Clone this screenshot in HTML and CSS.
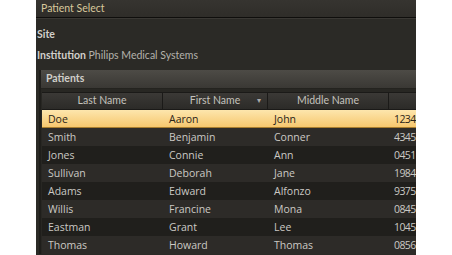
FILE: index.html
```html
<!DOCTYPE html>
<html>
<head>
<meta charset="utf-8">
<link rel="stylesheet" href="styles.css">
</head>
<body>
<div class="panel">
  <div class="titlebar">Patient Select</div>
  <div class="content">
    <div class="field field-site"><b>Site</b></div>
    <div class="field field-inst"><b>Institution</b> Philips Medical Systems</div>
    <div class="group">
      <div class="group-head">Patients</div>
      <div class="table">
        <div class="row head">
          <div class="cell">Last Name</div>
          <div class="cell sorted">First Name <span class="arrow">▾</span></div>
          <div class="cell">Middle Name</div>
          <div class="cell"></div>
        </div>
        <div class="row sel"><div class="cell">Doe</div><div class="cell">Aaron</div><div class="cell">John</div><div class="cell num">1234</div></div>
        <div class="row odd"><div class="cell">Smith</div><div class="cell">Benjamin</div><div class="cell">Conner</div><div class="cell num">4345</div></div>
        <div class="row even"><div class="cell">Jones</div><div class="cell">Connie</div><div class="cell">Ann</div><div class="cell num">0451</div></div>
        <div class="row odd"><div class="cell">Sullivan</div><div class="cell">Deborah</div><div class="cell">Jane</div><div class="cell num">1984</div></div>
        <div class="row even"><div class="cell">Adams</div><div class="cell">Edward</div><div class="cell">Alfonzo</div><div class="cell num">9375</div></div>
        <div class="row odd"><div class="cell">Willis</div><div class="cell">Francine</div><div class="cell">Mona</div><div class="cell num">0845</div></div>
        <div class="row even"><div class="cell">Eastman</div><div class="cell">Grant</div><div class="cell">Lee</div><div class="cell num">1045</div></div>
        <div class="row odd"><div class="cell">Thomas</div><div class="cell">Howard</div><div class="cell">Thomas</div><div class="cell num">0856</div></div>
      </div>
    </div>
  </div>
</div>
</body>
</html>
```
FILE: styles.css
```css
html, body { margin: 0; padding: 0; background: #ffffff; }
body { font-family: Lato, "Open Sans", "Liberation Sans", sans-serif; }
.panel {
  margin-left: 36px;
  width: 380px;
  height: 255px;
  overflow: hidden;
  background: #2b2a26;
}
.titlebar {
  height: 17px;
  line-height: 16px;
  padding-left: 5px;
  font-size: 10.5px;
  color: #d8c89c;
  background: linear-gradient(#363430, #2f2d29);
  border-bottom: 1px solid #0f0e0c;
  box-shadow: 0 1px 0 #3a3834;
}
.content { padding: 0 0 0 1px; }
.field { font-size: 10.5px; color: #b4b2ac; height: 21px; line-height: 21px; }
.field b { color: #d2d0cb; font-weight: 700; }
.field-site { margin-top: 6px; }
.group { margin: 4px 0 0 2px; background: #282723; border-left: 2px solid #1f1e1b; }
.group-head {
  height: 18px;
  line-height: 17px;
  padding-left: 5px;
  font-size: 10.5px;
  font-weight: 700;
  color: #d0cec9;
  background: linear-gradient(#4d4b46, #3a3834);
  border-bottom: 1px solid #24231f;
}
.table { margin-top: 3px; margin-left: 1px; }
.row {
  display: grid;
  grid-template-columns: 121px 105px 121px 40px;
  height: 18px;
  line-height: 18px;
  font-family: "Open Sans", Lato, sans-serif;
  font-size: 10.5px;
}
.row .cell { padding-left: 6px; white-space: nowrap; overflow: hidden; }
.row .num { letter-spacing: -0.6px; padding-left: 5px; }
.row.head {
  height: 16px;
  line-height: 15px;
  font-family: Lato, sans-serif;
  font-size: 10.5px;
  color: #c4c2bd;
  background: linear-gradient(#3b3936, #2c2b28);
  border-top: 1px solid #1b1a18;
  border-bottom: 1px solid #1b1a18;
}
.row.head .cell { padding-left: 0; text-align: center; border-right: 1px solid #1b1a18; position: relative; }
.arrow { position: absolute; right: 6px; top: 0; font-size: 8px; color: #aaa; }
.row.sel { color: #2a2418; background: linear-gradient(#fde6ad, #f6c76e); border-bottom: 1px solid #a87d2e; height: 17px; }
.row.odd { color: #cbc9c4; background: #2d2b28; }
.row.even { color: #cbc9c4; background: #201f1c; }
```
